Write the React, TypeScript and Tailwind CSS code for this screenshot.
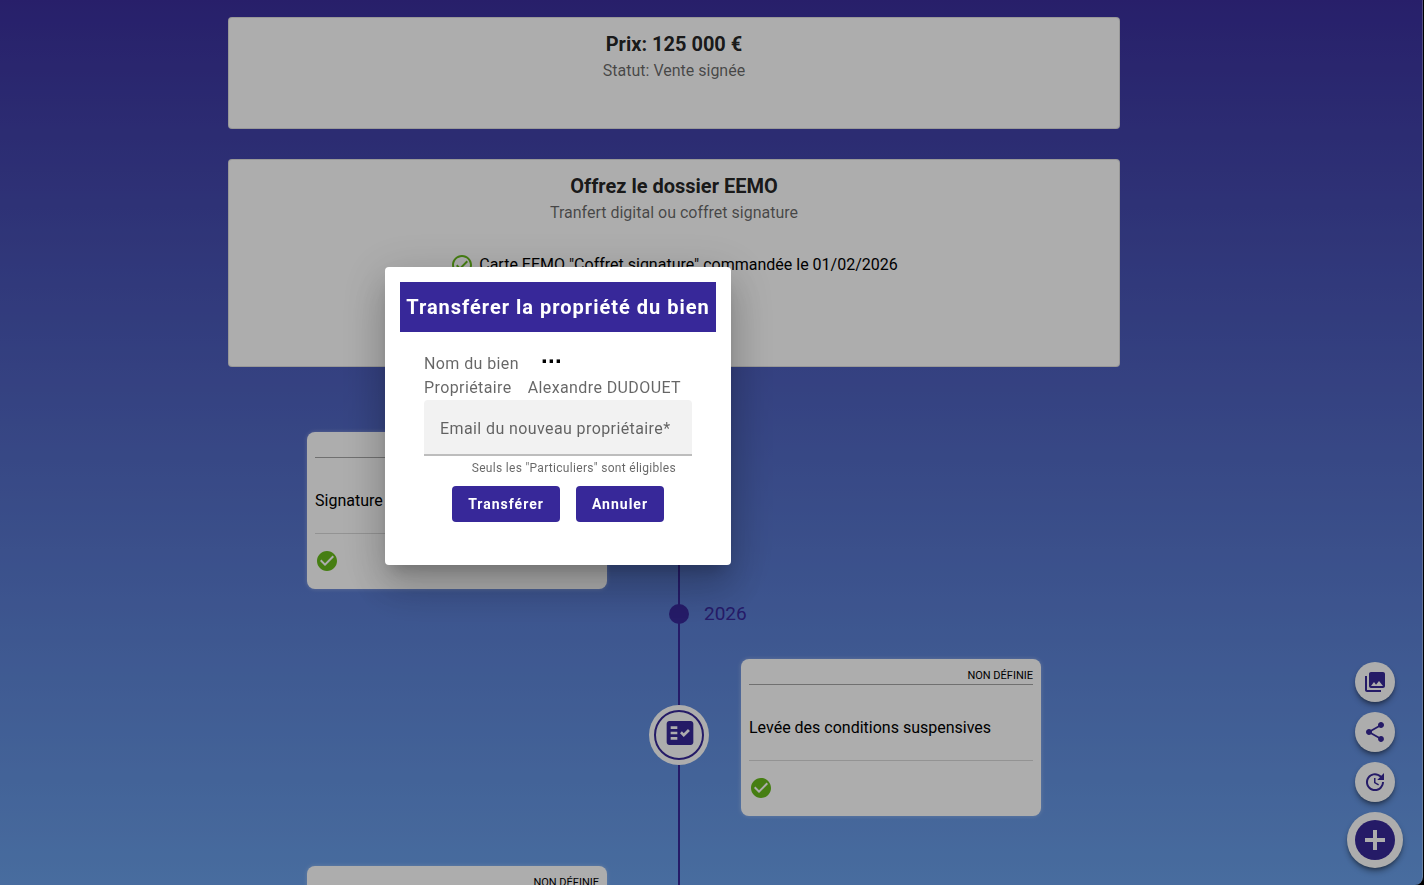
import type { ReactNode } from "react";
import {
  MdCheckCircle,
  MdFactCheck,
  MdOutlineCheckCircle,
  MdPhotoLibrary,
  MdShare,
  MdUpdate,
} from "react-icons/md";

function InfoCard({ title, subtitle, className, children }: { title: string; subtitle: string; className: string; children?: ReactNode }) {
  return (
    <section className={`rounded border border-black/12 bg-white px-4 pt-3.5 pb-4 text-center ${className}`}>
      <h2 className="text-xl/6 font-bold text-black/87">{title}</h2>
      <p className="mt-[3px] text-base/6 text-black/60">{subtitle}</p>
      {children}
    </section>
  );
}

function EventCard({ title, date }: { title?: string; date?: string }) {
  return (
    <article className="rounded-lg bg-white p-2 shadow-[0_0_4px_rgba(255,255,255,0.35)]">
      <p className="h-[18px] border-b border-black/35 text-right text-[11px]/[18px] text-black">{date}</p>
      <h3 className="flex h-[76px] items-center border-b border-black/15 pt-2.5 text-base/6 text-black">{title}</h3>
      <div className="pt-[15px] pb-2">
        <MdCheckCircle className="size-6 text-[#67ba1b]" />
      </div>
    </article>
  );
}

function TimelineItem({ side, title, date }: { side: "left" | "right"; title?: string; date?: string }) {
  return (
    <li className="grid grid-cols-[300px_134px_300px]">
      <div>{side === "left" && <EventCard title={title} date={date} />}</div>
      <div className="pt-[46px] pl-[42px]">
        <div className="relative size-[60px] rounded-full bg-white p-[5px]">
          <div className="flex size-full items-center justify-center rounded-full border-2 border-[#372899] pb-1 pl-0.5">
            <MdFactCheck className="size-8 text-[#372899]" />
          </div>
        </div>
      </div>
      <div>{side === "right" && <EventCard title={title} date={date} />}</div>
    </li>
  );
}

function RoundButton({ label, children }: { label: string; children: ReactNode }) {
  return (
    <button
      type="button"
      aria-label={label}
      className="flex size-10 items-center justify-center rounded-full bg-white text-[#372899] shadow-md shadow-black/40"
    >
      {children}
    </button>
  );
}

function TransferDialog() {
  return (
    <div className="fixed inset-0 flex items-center justify-center bg-black/32 pr-[308px] pb-[53px]">
      <form
        role="dialog"
        aria-labelledby="transfer-title"
        className="w-[346px] rounded bg-white px-[15px] pt-[15px] pb-[43px] text-black/60 shadow-[0_11px_15px_-7px_rgba(0,0,0,0.2),0_24px_38px_3px_rgba(0,0,0,0.14),0_9px_46px_8px_rgba(0,0,0,0.12)]"
      >
        <h1
          id="transfer-title"
          className="bg-[#372899] text-center text-xl/[50px] font-bold tracking-wider whitespace-nowrap text-white"
        >
          Transférer la propriété du bien
        </h1>
        <div className="px-6 pt-5">
          <dl className="text-base/6 tracking-wide">
            <div className="flex items-start gap-[22px]">
              <dt>Nom du bien</dt>
              <dd className="font-['Liberation_Sans',sans-serif] text-2xl/[6px] font-bold text-black">...</dd>
            </div>
            <div className="flex gap-4">
              <dt>Propriétaire</dt>
              <dd className="whitespace-nowrap">Alexandre DUDOUET</dd>
            </div>
          </dl>
          <input
            type="email"
            required
            aria-label="Email du nouveau propriétaire"
            placeholder="Email du nouveau propriétaire*"
            className="h-14 w-full rounded-t border-b-2 border-[#bdbdbd] bg-[#f2f2f2] pt-0.5 pl-4 text-base tracking-wide outline-none placeholder:text-black/60"
          />
          <p className="pr-4 pt-1 text-right text-xs/4 tracking-wide">Seuls les "Particuliers" sont éligibles</p>
          <div className="mt-2.5 flex justify-center gap-4">
            <button type="submit" className="h-9 w-[108px] rounded bg-[#372899] text-sm font-bold tracking-[1px] text-white">
              Transférer
            </button>
            <button type="button" className="h-9 w-[88px] rounded bg-[#372899] text-sm font-bold tracking-[1px] text-white">
              Annuler
            </button>
          </div>
        </div>
      </form>
    </div>
  );
}

export default function App() {
  return (
    <div className="h-screen bg-black pr-px font-[Roboto,sans-serif]">
      <div className="h-full overflow-hidden rounded-br-lg border-r border-white/30 bg-linear-to-b from-[#3b2f9d] to-[#6aa0ea]">
        <main className="mr-[74px] flex flex-col items-center pt-[17px]">
          <div className="flex w-full max-w-[892px] flex-col gap-[30px]">
            <InfoCard title="Prix: 125 000 €" subtitle="Statut: Vente signée" className="min-h-28" />
            <InfoCard title="Offrez le dossier EEMO" subtitle="Tranfert digital ou coffret signature" className="min-h-52">
              <p className="mt-7 flex items-center justify-center gap-[5px] text-base/6 text-black">
                <MdOutlineCheckCircle className="size-6 text-[#67ba1b]" />
                Carte EEMO "Coffret signature" commandée le 01/02/2026
              </p>
            </InfoCard>
          </div>

          <ol className="relative mt-[65px]">
            <li aria-hidden="true" className="absolute inset-y-0 left-[371px] w-0.5 bg-[#372899]" />
            <TimelineItem side="left" title="Signature" />
            <li className="flex h-[70px] items-start gap-[15px] pt-[15px] pl-[362px]">
              <span className="size-5 rounded-full bg-[#372899]" />
              <span className="text-[19px]/5 text-[#372899]">2026</span>
            </li>
            <TimelineItem side="right" title="Levée des conditions suspensives" date="NON DÉFINIE" />
            <li className="h-[50px]" aria-hidden="true" />
            <TimelineItem side="left" date="NON DÉFINIE" />
          </ol>
        </main>

        <nav className="fixed right-[21px] bottom-[17px] flex flex-col items-center gap-2.5">
          <RoundButton label="Photos">
            <MdPhotoLibrary className="size-6" />
          </RoundButton>
          <RoundButton label="Partager">
            <MdShare className="size-6" />
          </RoundButton>
          <RoundButton label="Historique">
            <MdUpdate className="size-6" />
          </RoundButton>
          <button type="button" aria-label="Ajouter" className="rounded-full bg-white p-2 shadow-md shadow-black/40">
            <span className="flex size-10 items-center justify-center rounded-full bg-[#372899]">
              <svg viewBox="0 0 20 20" className="size-5 fill-white">
                <path d="M8 0h4v8h8v4h-8v8H8v-8H0V8h8z" />
              </svg>
            </span>
          </button>
        </nav>

        <TransferDialog />
      </div>
    </div>
  );
}
